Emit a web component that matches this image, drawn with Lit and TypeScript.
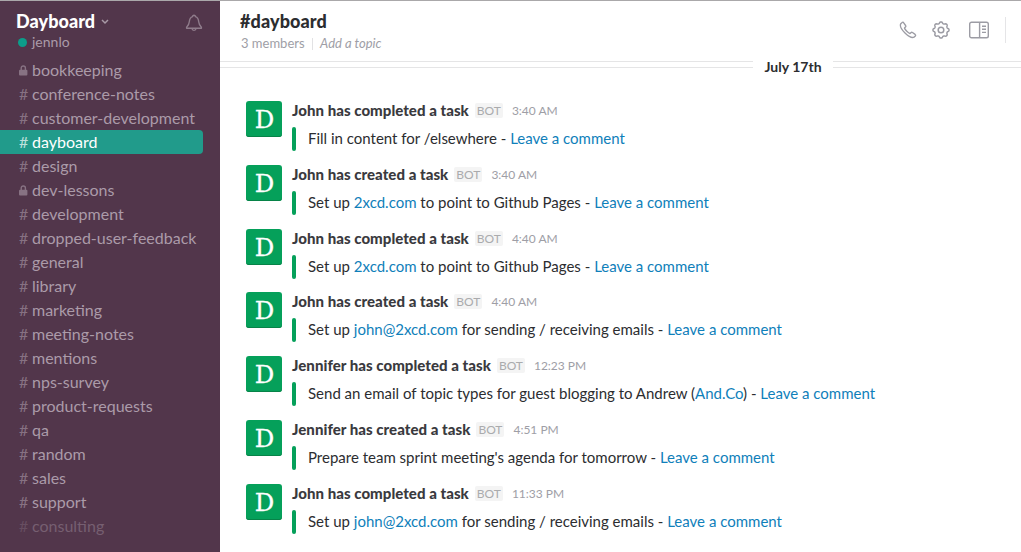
import { LitElement, html, css, svg } from "lit";
import { customElement } from "lit/decorators.js";
import { classMap } from "lit/directives/class-map.js";

type Part = string | { link: string };
interface Message { title: string; time: string; body: Part[]; }

const channels: { name: string; locked?: boolean; active?: boolean; muted?: boolean }[] = [
  { name: "bookkeeping", locked: true },
  { name: "conference-notes" },
  { name: "customer-development" },
  { name: "dayboard", active: true },
  { name: "design" },
  { name: "dev-lessons", locked: true },
  { name: "development" },
  { name: "dropped-user-feedback" },
  { name: "general" },
  { name: "library" },
  { name: "marketing" },
  { name: "meeting-notes" },
  { name: "mentions" },
  { name: "nps-survey" },
  { name: "product-requests" },
  { name: "qa" },
  { name: "random" },
  { name: "sales" },
  { name: "support" },
  { name: "consulting", muted: true },
];

const comment = { link: "Leave a comment" };
const messages: Message[] = [
  { title: "John has completed a task", time: "3:40 AM", body: ["Fill in content for /elsewhere - ", comment] },
  { title: "John has created a task", time: "3:40 AM", body: ["Set up ", { link: "2xcd.com" }, " to point to Github Pages - ", comment] },
  { title: "John has completed a task", time: "4:40 AM", body: ["Set up ", { link: "2xcd.com" }, " to point to Github Pages - ", comment] },
  { title: "John has created a task", time: "4:40 AM", body: ["Set up ", { link: "john@2xcd.com" }, " for sending / receiving emails - ", comment] },
  { title: "Jennifer has completed a task", time: "12:23 PM", body: ["Send an email of topic types for guest blogging to Andrew (", { link: "And.Co" }, ") - ", comment] },
  { title: "Jennifer has created a task", time: "4:51 PM", body: ["Prepare team sprint meeting's agenda for tomorrow - ", comment] },
  { title: "John has completed a task", time: "11:33 PM", body: ["Set up ", { link: "john@2xcd.com" }, " for sending / receiving emails - ", comment] },
];

// Eight-lobed cog outline around (10, 10)
const cog = (() => {
  const pts: string[] = [];
  for (let i = 0; i <= 96; i++) {
    const a = (i / 96) * Math.PI * 2;
    const r = 7.3 + 0.85 * Math.tanh(1.4 * Math.cos(8 * a));
    pts.push(`${(10 + r * Math.sin(a)).toFixed(2)} ${(10 - r * Math.cos(a)).toFixed(2)}`);
  }
  return "M" + pts.join("L") + "Z";
})();

@customElement("channel-sidebar")
export class ChannelSidebar extends LitElement {
  static styles = css`
    :host { display: block; width: 220px; flex: none; background: #52364b; color: #ab9ba9; box-sizing: border-box; padding-top: 9px; overflow: hidden; }
    .team { display: flex; justify-content: space-between; height: 48px; padding: 0 17px 0 16px; }
    .name { display: flex; align-items: center; gap: 6px; height: 22px; color: #fff; font-size: 18px; line-height: 22px; font-weight: 900; letter-spacing: 0.05px; }
    .user { display: flex; align-items: center; gap: 5px; padding-left: 2px; height: 20px; font-size: 14px; line-height: 20px; }
    .dot { width: 9px; height: 9px; border-radius: 50%; background: #0c9d8a; }
    .chevron { color: #a899a6; margin-top: 1px; }
    .bell { margin-top: 4px; color: #8f7c8b; }
    .row { display: flex; align-items: center; height: 24px; box-sizing: border-box; padding-left: 19px; margin-right: 17px; font-size: 16px; line-height: 24px; border-radius: 0 4px 4px 0; white-space: nowrap; }
    .mark { width: 13px; flex: none; opacity: 0.6; display: flex; }
    .active { background: #219b8b; color: #fff; }
    .active .mark { opacity: 0.7; }
    .muted { color: #765f71; }
    svg { display: block; fill: none; stroke: currentColor; }
  `;
  render() {
    return html`
      <div class="team">
        <div>
          <div class="name">Dayboard
            <svg class="chevron" width="8" height="6" viewBox="0 0 8 6" stroke-width="1.5"><path d="M1 1l3 3 3-3" /></svg>
          </div>
          <div class="user"><span class="dot"></span>jennlo</div>
        </div>
        <svg class="bell" width="18" height="18" viewBox="0 0 18 18" stroke-width="1.4" stroke-linejoin="round">
          <path d="M7.6 2.6C7.6 .8 10.4 .8 10.4 2.6C13 3.4 13.5 5.4 13.7 7.8C13.9 10.6 14.8 11.7 16.4 13.3V14.3H1.6V13.3C3.2 11.7 4.1 10.6 4.3 7.8C4.5 5.4 5 3.4 7.6 2.6ZM6.9 14.5C7.2 17 10.8 17 11.1 14.5" />
        </svg>
      </div>
      ${channels.map((c) => html`
        <div class=${classMap({ row: true, active: !!c.active, muted: !!c.muted })}>
          <span class="mark">${c.locked
            ? html`<svg width="9" height="11" viewBox="0 0 9 11"><path d="M2.2 5V3.1a2.1 2.1 0 0 1 4.2 0V5" stroke-width="1.4" /><rect x="0" y="4.7" width="8.4" height="5.8" rx="1" fill="currentColor" stroke="none" /></svg>`
            : "#"}</span>${c.name}
        </div>`)}
    `;
  }
}

@customElement("chat-message")
export class ChatMessage extends LitElement {
  static properties = { message: { attribute: false } };
  declare message: Message;
  static styles = css`
    :host { display: flex; height: 63.75px; gap: 10px; }
    .avatar { width: 36px; height: 36px; flex: none; margin-top: 1px; border-radius: 3px; background: #05a05a; box-shadow: inset 0 -1px #078348; }
    .avatar svg { display: block; }
    .avatar text { font-family: "DejaVu Serif", serif; font-size: 25px; fill: #fff; stroke: #fff; stroke-width: 0.3px; }
    .head { display: flex; align-items: center; height: 20px; white-space: nowrap; }
    .title { font-size: 15px; font-weight: 900; color: #3a3a3e; letter-spacing: 0.04px; }
    .bot { margin: 1px 9px 0 6px; padding: 0 2px; height: 15px; line-height: 15px; font-size: 12px; color: #aaabad; background: #f4f4f4; border-radius: 2px; }
    .time { margin-top: 1px; font-size: 12px; color: #9e9ea6; }
    .attachment { display: flex; gap: 12px; margin-top: 7px; height: 24px; }
    .bar { width: 4px; border-radius: 4px; background: #05a05a; }
    .text { font-size: 15px; line-height: 22px; color: #2c2d30; white-space: pre; }
    .link { color: #0f80ba; }
  `;
  render() {
    const m = this.message;
    return html`
      <div class="avatar"><svg width="36" height="36" viewBox="0 0 36 36">${svg`<text x="8.7" y="26.8" textLength="19.5" lengthAdjust="spacingAndGlyphs">D</text>`}</svg></div>
      <div>
        <div class="head"><span class="title">${m.title}</span><span class="bot">BOT</span><span class="time">${m.time}</span></div>
        <div class="attachment"><span class="bar"></span><span class="text">${m.body.map((p) => typeof p === "string" ? p : html`<span class="link">${p.link}</span>`)}</span></div>
      </div>`;
  }
}

@customElement("app-root")
export class AppRoot extends LitElement {
  static styles = css`
    :host { display: flex; box-sizing: border-box; height: 552px; width: 1021px; border-top: 1px solid #aaa8aa; overflow: hidden; background: #fff; font-family: Lato, sans-serif; }
    .main { flex: 1; min-width: 0; }
    .header { display: flex; justify-content: space-between; box-sizing: border-box; height: 61px; padding: 8px 15px 0 20px; border-bottom: 1px solid #e5e5e6; }
    .channel { font-size: 18px; line-height: 24px; font-weight: 900; color: #2c2d30; letter-spacing: 0.1px; }
    .meta { display: flex; align-items: center; font-size: 13px; line-height: 21px; color: #9e9ea6; padding-left: 1px; }
    .split { width: 1px; height: 12px; background: #e2e2e4; margin: 0 7.5px 0 7px; }
    .tools { display: flex; align-items: center; height: 26px; margin-top: 8px; color: #9c9ca4; }
    .tools svg { display: block; fill: none; stroke: currentColor; }
    .phone { margin-right: 14px; }
    .gear { margin-right: 18px; }
    .edge { width: 1px; height: 26px; background: #e5e5e7; margin-left: 16px; }
    .day { display: flex; align-items: center; height: 11px; font-size: 14px; line-height: 11px; font-weight: 700; color: #2c2d30; }
    .day::before, .day::after { content: ""; height: 1px; background: #e5e5e6; flex: none; }
    .day::before { width: 533px; }
    .day::after { width: 188px; }
    .day span { flex: 1; height: 16px; line-height: 17px; margin-top: -3px; background: #fff; text-align: center; white-space: nowrap; letter-spacing: 0.03px; }
    .messages { padding: 27px 0 0 26px; }
  `;
  render() {
    return html`
      <channel-sidebar></channel-sidebar>
      <div class="main">
        <div class="header">
          <div>
            <div class="channel">#dayboard</div>
            <div class="meta">3 members<span class="split"></span><i>Add a topic</i></div>
          </div>
          <div class="tools">
            <svg class="phone" width="18" height="18" viewBox="0 0 18 18" stroke-width="1.35" stroke-linejoin="round"><path d="M3.1 1.5L1.8 2.7C.5 5 3.5 9.5 6 12C8.6 14.5 12.7 17.3 15 16.2L16.3 15C16.8 14.4 16.7 13.9 16.1 13.4L13.5 11.5C12.9 11.1 12.4 11.2 11.9 11.7L11 12.6C9.3 12 6 8.8 5.5 7L6.4 6.1C6.9 5.6 7 5.1 6.6 4.5L4.7 1.8C4.2 1.1 3.7 .9 3.1 1.5Z" /></svg>
            <svg class="gear" width="20" height="20" viewBox="0 0 20 20" stroke-width="1.5" stroke-linejoin="round"><path d=${cog} /><circle cx="10" cy="10" r="2.8" /></svg>
            <svg width="20" height="18" viewBox="0 0 20 18" stroke-width="1.4"><rect x=".7" y="1.2" width="18.6" height="15.6" rx="1.8" /><path d="M10.6 1v16M13 5.2h4M13 8.2h4M13 11.4h4" /></svg>
            <span class="edge"></span>
          </div>
        </div>
        <div class="day"><span>July 17th</span></div>
        <div class="messages">${messages.map((m) => html`<chat-message .message=${m}></chat-message>`)}</div>
      </div>`;
  }
}
